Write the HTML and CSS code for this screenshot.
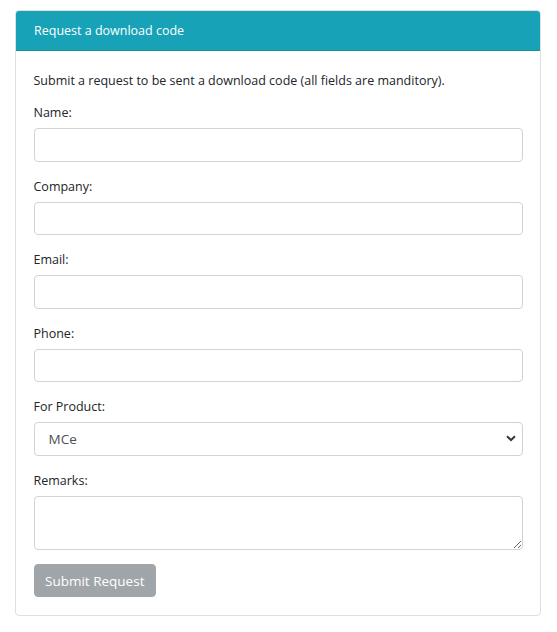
FILE: index.html
```html
<!DOCTYPE html>
<html>
<head>
<meta charset="utf-8">
<link rel="stylesheet" href="styles.css">
</head>
<body>
<div class="card">
  <div class="card-header">Request a download code</div>
  <div class="card-body">
    <p class="intro">Submit a request to be sent a download code (all fields are manditory).</p>
    <div class="form-group">
      <label class="label">Name:</label>
      <input class="control" type="text">
    </div>
    <div class="form-group">
      <label class="label">Company:</label>
      <input class="control" type="text">
    </div>
    <div class="form-group">
      <label class="label">Email:</label>
      <input class="control" type="text">
    </div>
    <div class="form-group">
      <label class="label">Phone:</label>
      <input class="control" type="text">
    </div>
    <div class="form-group">
      <label class="label">For Product:</label>
      <div class="select-wrap">
        <select class="control select"><option>MCe</option></select>
        <svg class="chevron" width="10" height="7" viewBox="0 0 10 7"><path d="M1 1.2 L5 5 L9 1.2" fill="none" stroke="#343a40" stroke-width="2"/></svg>
      </div>
    </div>
    <div class="form-group">
      <label class="label">Remarks:</label>
      <textarea class="control textarea" rows="2"></textarea>
    </div>
    <button class="btn" disabled>Submit Request</button>
  </div>
</div>
</body>
</html>
```
FILE: styles.css
```css
html, body {
  margin: 0;
  background: #fff;
}
body {
  padding: 10px 16px 0 15px;
  font-family: "Open Sans", "Noto Sans", sans-serif;
  font-size: 12.5px;
  color: #212529;
}
.card {
  border: 1px solid rgba(0,0,0,.125);
  border-radius: 4px;
  overflow: hidden;
}
.card-header {
  background: #17a2b8;
  color: #fff;
  height: 40px;
  box-sizing: border-box;
  padding: 0 18px;
  display: flex;
  align-items: center;
  border-bottom: 1px solid rgba(0,0,0,.125);
}
.card-body {
  padding: 19px 17.5px 17.5px;
}
.intro {
  margin: 0 0 11px;
  line-height: 21px;
}
.form-group {
  margin-bottom: 14px;
}
.label {
  display: block;
  line-height: 21px;
  margin-bottom: 5px;
}
.control {
  display: block;
  width: 100%;
  box-sizing: border-box;
  height: 33.5px;
  border: 1px solid #ced4da;
  border-radius: 4px;
  background: #fff;
  font: inherit;
  color: #495057;
  padding: 5px 10.5px;
  margin: 0;
}
.select-wrap {
  position: relative;
}
.select {
  appearance: none;
  -webkit-appearance: none;
  padding-left: 14px;
  font-size: 13.5px;
}
.chevron {
  position: absolute;
  right: 7px;
  top: 13px;
  pointer-events: none;
}
.textarea {
  height: 54.5px;
  resize: vertical;
}
.btn {
  display: block;
  margin-top: 1px;
  height: 33px;
  padding: 0 10.5px;
  border: 1px solid #a0a5aa;
  background: #a0a5aa;
  color: #fff;
  border-radius: 4px;
  font: inherit;
  font-size: 13.5px;
}
```
